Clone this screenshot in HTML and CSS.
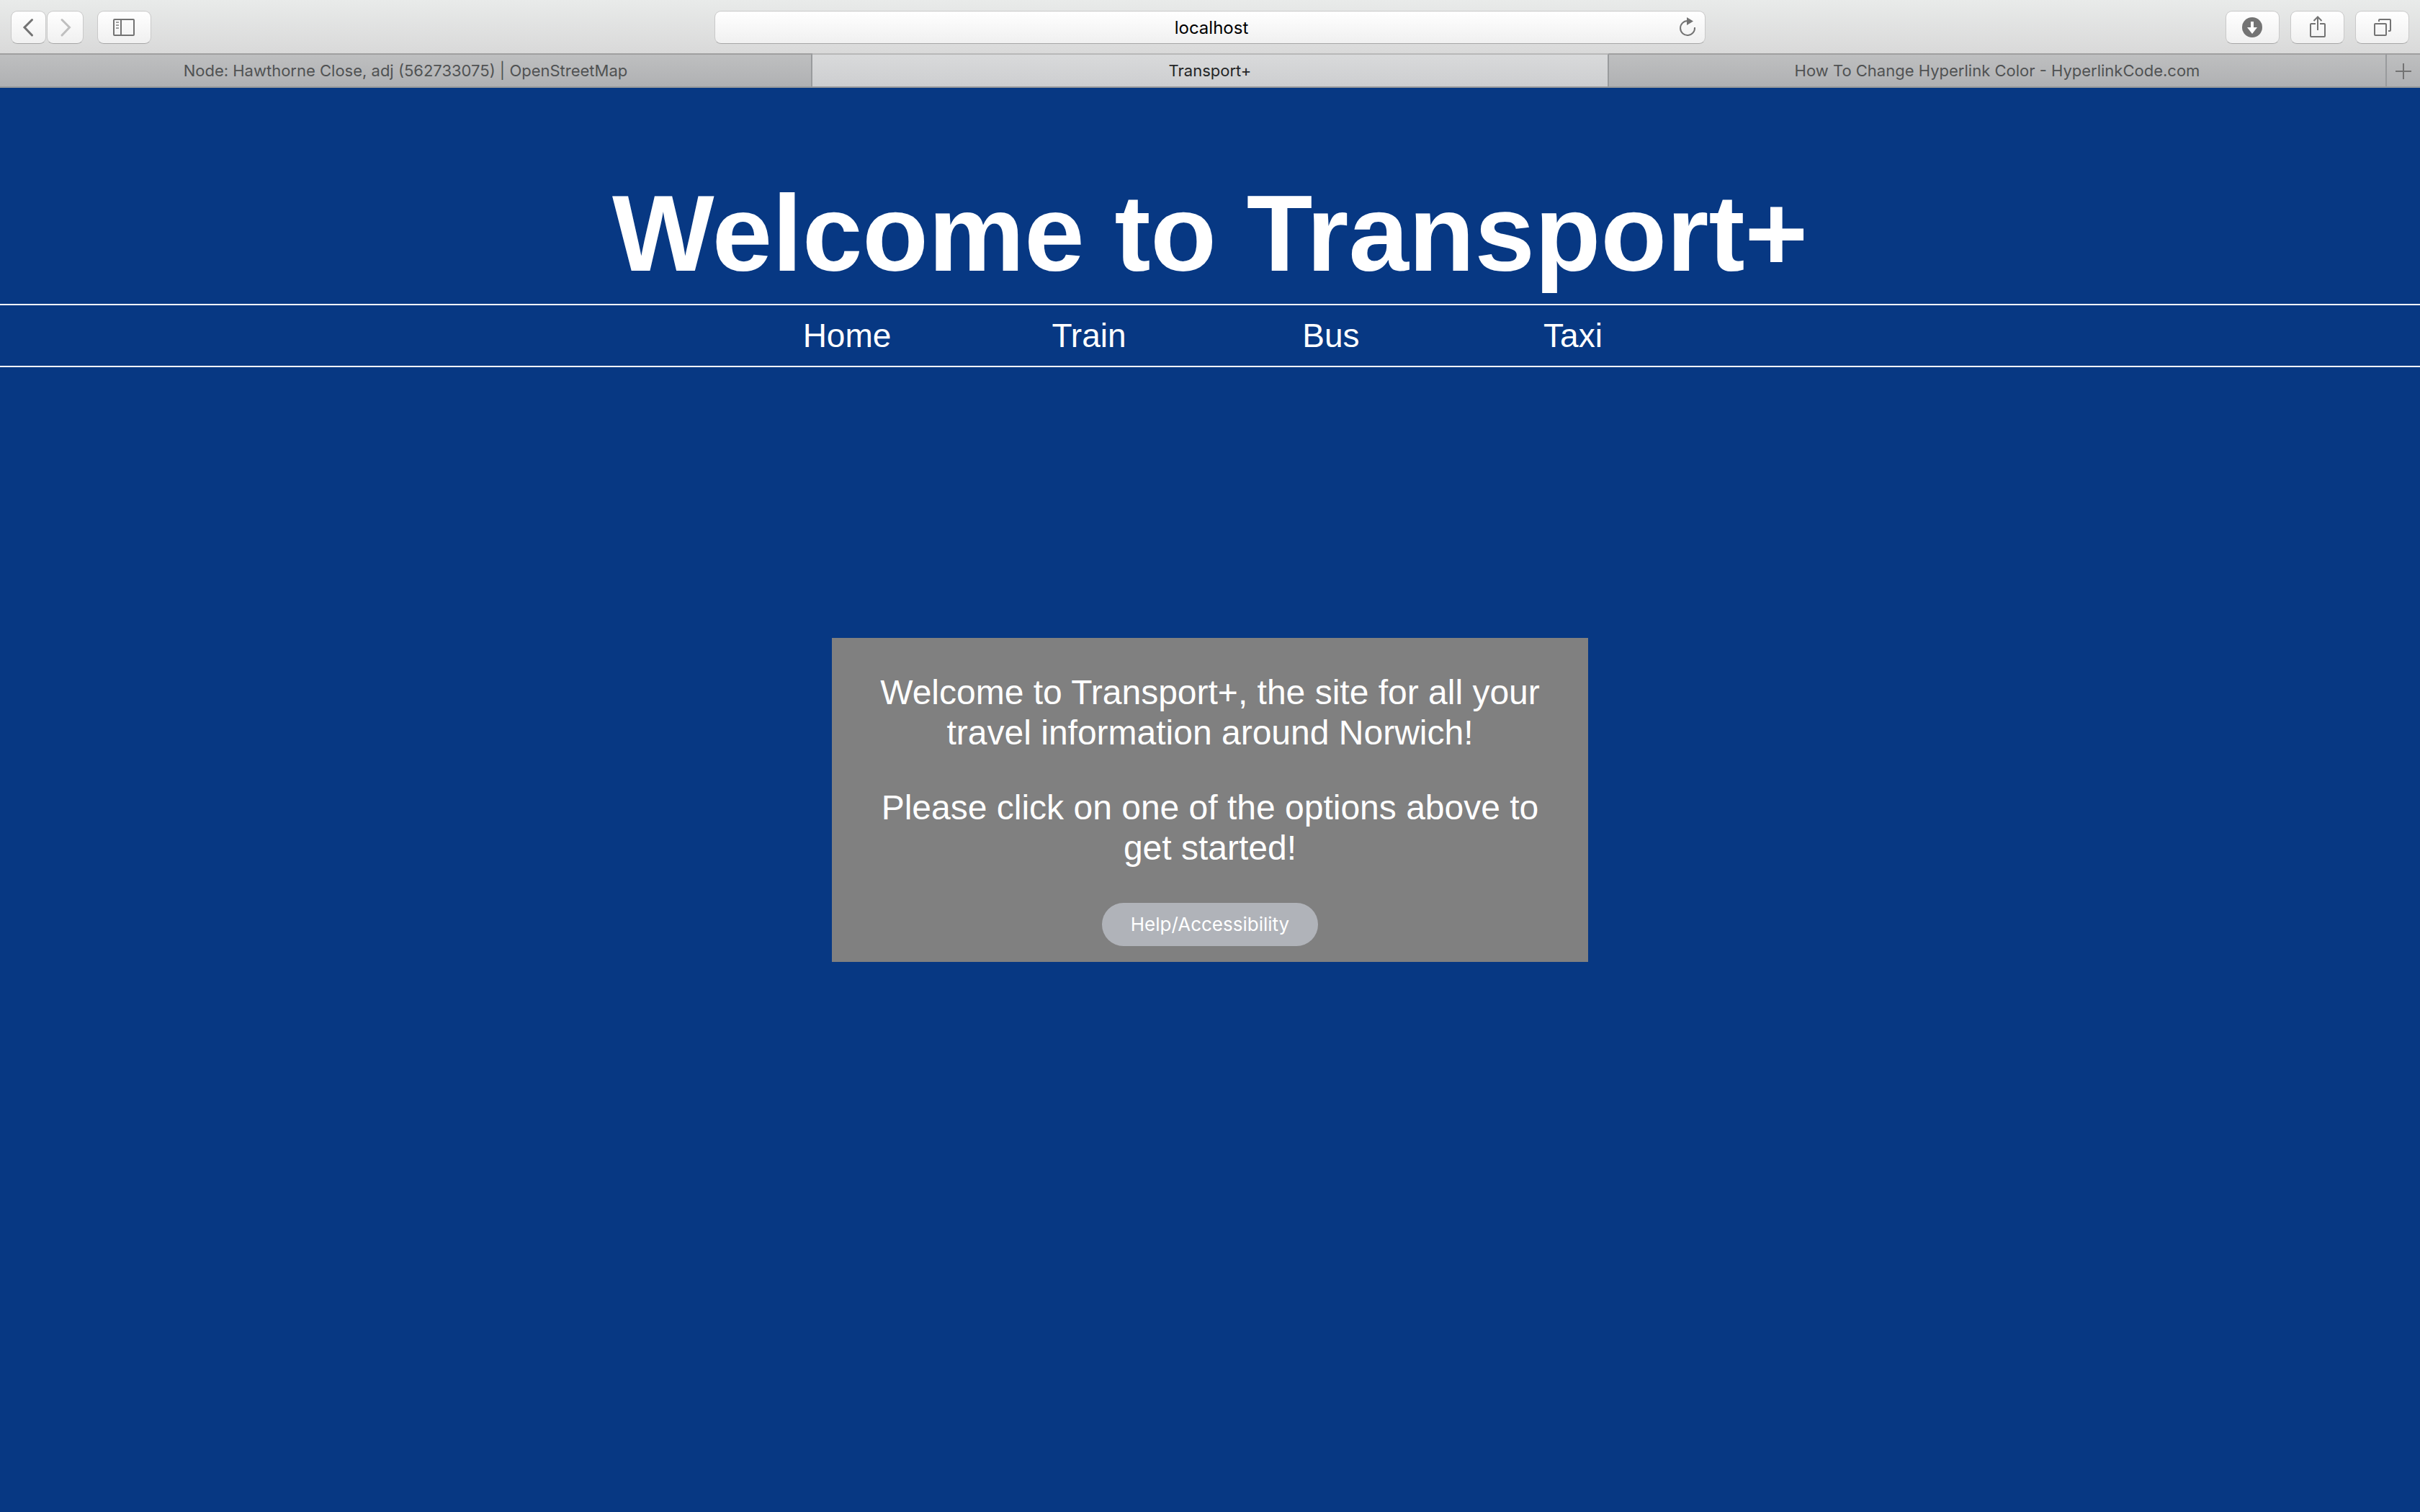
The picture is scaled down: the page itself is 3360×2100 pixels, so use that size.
FILE: index.html
```html
<!DOCTYPE html>
<html lang="en">
<head>
<meta charset="utf-8">
<meta name="viewport" content="width=device-width, initial-scale=1">
<title>Transport+</title>
<link rel="stylesheet" href="styles.css">
</head>
<body>
<div class="browser">
  <div class="toolbar">
    <div class="tools">
      <div class="history">
        <button class="tool tool-back" type="button" aria-label="Back">
          <svg class="icon icon-chevron" viewBox="0 0 46 44" width="46" height="44"><path d="M27.5 11.5 17 22l10.500 11"/></svg>
        </button>
        <button class="tool tool-forward" type="button" aria-label="Forward">
          <svg class="icon icon-chevron icon-faded" viewBox="0 0 48 44" width="48" height="44"><path d="M19 11.500 29.500 22 19 33"/></svg>
        </button>
      </div>
      <button class="tool" type="button" aria-label="Sidebar">
        <svg class="icon" viewBox="0 0 73 44" width="73" height="44"><rect x="22" y="11" width="28" height="22" rx="1"/><path d="M32 11v22"/><path class="faint" d="M25 15h4M25 19h4M25 23h4"/></svg>
      </button>
    </div>
    <form class="address">
      <input class="address-input" type="text" value="localhost" aria-label="Address">
      <button class="reload" type="button" aria-label="Reload">
        <svg class="icon" viewBox="0 0 48 44" width="48" height="44"><path d="M34 22A10 10 0 1 1 24 13"/><path class="solid" d="M23 8l9 5.500-9 5.500z"/></svg>
      </button>
    </form>
    <div class="tools tools-end">
      <button class="tool" type="button" aria-label="Downloads">
        <svg class="icon" viewBox="0 0 73 44" width="73" height="44"><circle class="solid" cx="36" cy="22" r="14"/><path class="cutout" d="M34 14h4v8h5l-7 9-7-9h5z"/></svg>
      </button>
      <button class="tool" type="button" aria-label="Share">
        <svg class="icon" viewBox="0 0 73 44" width="73" height="44"><path d="M34 17h-6a1 1 0 0 0-1 1v16a1 1 0 0 0 1 1h18a1 1 0 0 0 1-1V18a1 1 0 0 0-1-1h-6"/><path d="M37 26V7.500M31.500 13 37 7.500l5.500 5.500"/></svg>
      </button>
      <button class="tool" type="button" aria-label="Show all tabs">
        <svg class="icon" viewBox="0 0 73 44" width="73" height="44"><rect x="26" y="17" width="16" height="16" rx="1"/><path d="M32 14v-2a1 1 0 0 1 1-1h14a1 1 0 0 1 1 1v14a1 1 0 0 1-1 1h-2"/></svg>
      </button>
    </div>
  </div>
  <div class="tabs">
    <button class="tab tab-first" type="button">Node: Hawthorne Close, adj (562733075) | OpenStreetMap</button>
    <button class="tab tab-current" type="button">Transport+</button>
    <button class="tab tab-last" type="button">How To Change Hyperlink Color - HyperlinkCode.com</button>
    <button class="tab-new" type="button" aria-label="New tab">
      <svg class="icon" viewBox="0 0 46 44" width="46" height="44"><path d="M12 23h22M23 12v22"/></svg>
    </button>
  </div>
</div>
<header class="masthead">
  <h1 class="title">Welcome to Transport+</h1>
</header>
<nav class="menu">
  <a class="menu-link" href="#home">Home</a>
  <a class="menu-link" href="#train">Train</a>
  <a class="menu-link" href="#bus">Bus</a>
  <a class="menu-link" href="#taxi">Taxi</a>
</nav>
<main class="content">
  <section class="card">
    <p class="card-text">Welcome to Transport+, the site for all your travel information around Norwich!</p>
    <p class="card-text">Please click on one of the options above to get started!</p>
    <button class="help" type="button">Help/Accessibility</button>
  </section>
</main>
</body>
</html>
```
FILE: styles.css
```css
*,
*::before,
*::after {
  box-sizing: border-box;
}

body {
  margin: 0;
  min-height: 100vh;
  background: #073883;
  color: #fff;
  font-family: Arial, "Liberation Sans", sans-serif;
}

button,
input {
  margin: 0;
  padding: 0;
  border: 0;
  background: none;
  color: inherit;
  font-family: Inter, "Liberation Sans", sans-serif;
}

/* Browser toolbar */
.toolbar {
  display: grid;
  grid-template-columns: 1fr minmax(0, 1376px) 1fr;
  align-items: center;
  padding: 15px 15px 13px;
  background: linear-gradient(#e9ebea, #d9d9d9);
}

.tools {
  display: flex;
  gap: 19px;
}

.tools-end {
  justify-content: flex-end;
  gap: 15px;
}

.history {
  display: flex;
  gap: 1px;
}

.tool,
.address {
  height: 46px;
  border: 1px solid #c9c9c9;
  border-bottom-color: #a6a6a6;
  border-radius: 9px;
  background: linear-gradient(#fff, #f0f0f0);
}

.tool {
  width: 75px;
}

.tool-back {
  width: 49px;
}

.tool-forward {
  width: 51px;
}

.icon {
  display: block;
  margin: 0 auto;
  fill: none;
  stroke: #737373;
  stroke-width: 2;
}

.icon-chevron {
  stroke-width: 3;
  stroke-linecap: round;
}

.icon-faded {
  stroke: #bfbfbf;
}

.faint {
  stroke: #a0a0a0;
}

.solid {
  fill: #737373;
  stroke: none;
}

.cutout {
  fill: #fff;
  stroke: none;
}

.address {
  display: grid;
  grid-template-columns: 52px 1fr 48px;
}

.address-input {
  grid-column: 2;
  min-width: 0;
  color: #000;
  font-size: 24px;
  text-align: center;
}

/* Browser tabs */
.tabs {
  display: flex;
  height: 48px;
  border-bottom: 2px solid #97999b;
}

.tab,
.tab-new {
  border-top: 2px solid #a0a0a0;
  border-right: 2px solid #999b9d;
  background: linear-gradient(#bebfc0, #b0b1b3);
  color: #505253;
}

.tab {
  flex: 1 1 0;
  min-width: 0;
  overflow: hidden;
  font-size: 22px;
  line-height: 26px;
  white-space: nowrap;
}

.tab-first {
  flex-grow: 1128;
}

.tab-current {
  flex-grow: 1106;
  border-top-color: #b8b8b8;
  background: linear-gradient(#d9dadb, #cdced0);
  color: #242627;
}

.tab-last {
  flex-grow: 1080;
}

.tab-new {
  flex: none;
  width: 46px;
  border-right: 0;
}

/* Site */
.masthead {
  padding: 118px 0 14px;
}

.title {
  margin: 0;
  font-size: 150px;
  line-height: 168px;
  text-align: center;
}

.menu {
  display: flex;
  justify-content: center;
  padding: 14px 0;
  border-top: 2px solid #fff;
  border-bottom: 2px solid #fff;
}

.menu-link {
  width: 10%;
  color: #fff;
  font-size: 46px;
  line-height: 56px;
  text-align: center;
  text-decoration: none;
}

.content {
  display: flex;
  justify-content: center;
  padding-top: 376px;
}

.card {
  display: flex;
  flex-direction: column;
  align-items: center;
  gap: 48px;
  width: 100%;
  max-width: 1050px;
  padding: 48px 48px 22px;
  background: #808080;
}

.card-text {
  margin: 0;
  font-size: 48px;
  line-height: 56px;
  text-align: center;
}

.help {
  width: 300px;
  height: 60px;
  padding-bottom: 2px;
  border-radius: 30px;
  background: #b0b3b9;
  color: #fff;
  font-size: 26px;
}
```
